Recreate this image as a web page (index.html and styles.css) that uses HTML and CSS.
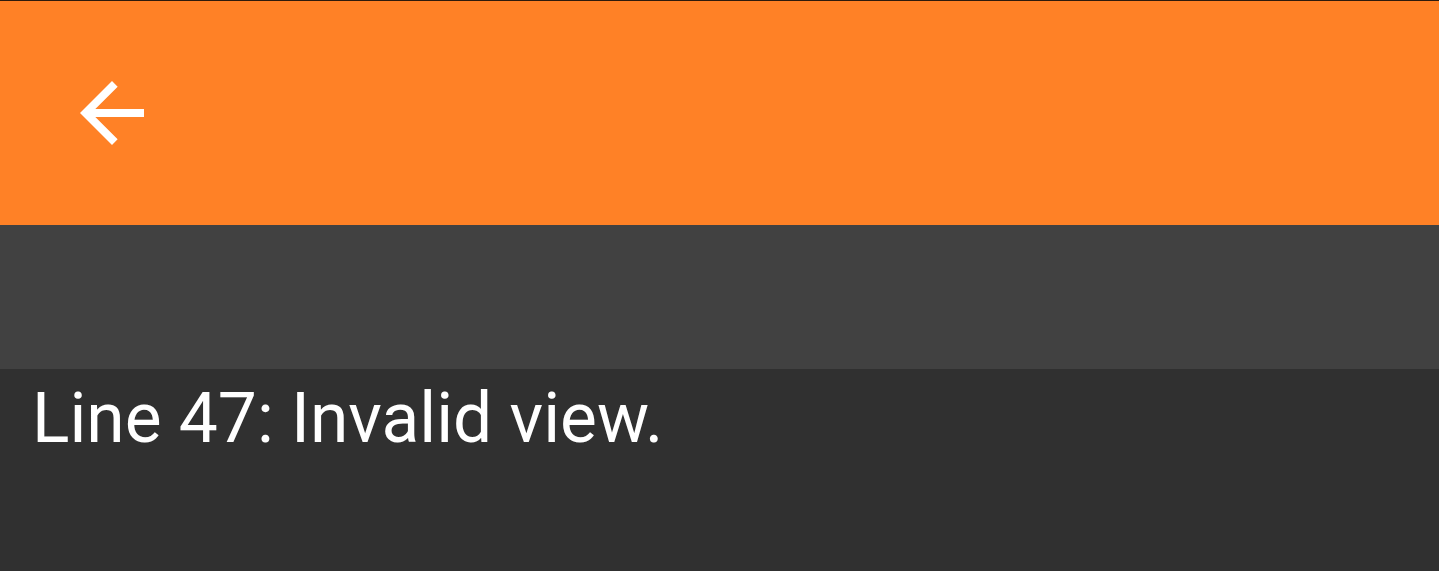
FILE: index.html
```html
<!DOCTYPE html>
<html lang="en">
<head>
  <meta charset="UTF-8" />
  <meta name="viewport" content="width=device-width, initial-scale=1.0" />
  <title>Error</title>
  <link rel="stylesheet" href="styles.css">
</head>
<body>
  <header class="toolbar">
    <button class="back-btn" aria-label="Back">
      <svg viewBox="0 0 24 24" width="96" height="96">
        <path d="M20 11H7.83l5.59-5.59L12 4l-8 8 8 8 1.41-1.41L7.83 13H20v-2z" fill="#fff"/>
      </svg>
    </button>
  </header>
  <div class="subbar"></div>
  <main class="content">
    <p class="message">Line 47: Invalid view.</p>
  </main>
</body>
</html>
```

FILE: styles.css
```css
html, body {
  height: 100%;
}
body {
  margin: 0;
  font-family: Roboto, 'Liberation Sans', sans-serif;
  background-color: #303030;
  color: #fff;
}
.toolbar {
  background-color: #ff8126;
  border-top: 1px solid #2e1a0c;
  display: flex;
  align-items: flex-start;
  padding: 64px 0 0 64px;
  height: 160px;
}
.back-btn {
  width: 96px;
  height: 96px;
  padding: 0;
  border: none;
  background: none;
  cursor: pointer;
}
.back-btn svg {
  display: block;
}
.subbar {
  height: 144px;
  background-color: #414141;
}
.content {
  padding: 9px 0 0 32px;
}
.message {
  margin: 0;
  font-size: 69.5px;
  line-height: normal;
}
```
